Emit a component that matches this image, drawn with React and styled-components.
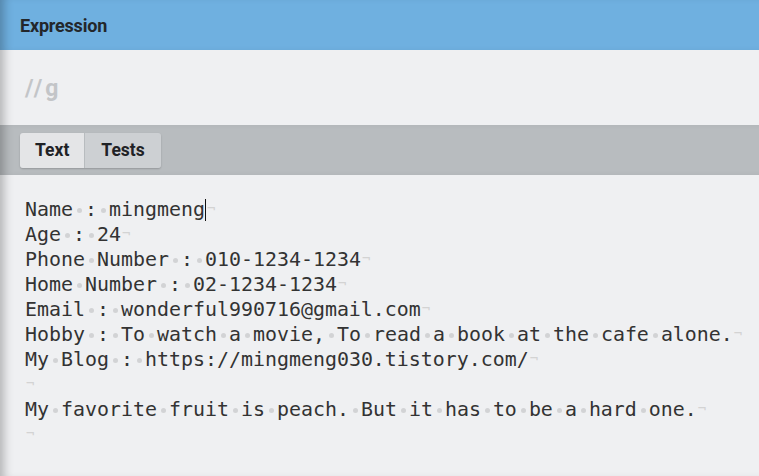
import React from 'react';
import styled, { createGlobalStyle } from 'styled-components';

const GlobalStyle = createGlobalStyle`
  html, body {
    margin: 0;
    padding: 0;
    background: #eff0f2;
  }
`;

const lines = [
  'Name : mingmeng',
  'Age : 24',
  'Phone Number : 010-1234-1234',
  'Home Number : 02-1234-1234',
  'Email : wonderful990716@gmail.com',
  'Hobby : To watch a movie, To read a book at the cafe alone.',
  'My Blog : https://mingmeng030.tistory.com/',
  '',
  'My favorite fruit is peach. But it has to be a hard one.',
  '',
];

function App() {
  return (
    <Page>
      <GlobalStyle />
      <Header>
        <Title>Expression</Title>
      </Header>
      <ExpressionBox>
        <Regex>//g</Regex>
      </ExpressionBox>
      <TabBar>
        <TabGroup>
          <Tab $active>Text</Tab>
          <Tab>Tests</Tab>
        </TabGroup>
      </TabBar>
      <Editor>
        {lines.map((line, i) => (
          <Line key={i}>
            {line.split(' ').map((word, j, arr) => (
              <React.Fragment key={j}>
                {word}
                {i === 0 && j === arr.length - 1 && <Caret />}
                {j < arr.length - 1 && <Space> </Space>}
              </React.Fragment>
            ))}
            <Eol>¬</Eol>
          </Line>
        ))}
      </Editor>
    </Page>
  );
}

const Page = styled.div`
  position: relative;
  width: 759px;
  height: 476px;
  overflow: hidden;
  background: #eff0f2;
  font-family: Roboto, 'Liberation Sans', sans-serif;
  box-shadow: inset 10px 0 10px -6px rgba(0, 0, 0, 0.25);
`;

const Header = styled.header`
  height: 50px;
  display: flex;
  align-items: center;
  padding-left: 20px;
  background: #6fb0e0;
  box-shadow: inset 10px 0 10px -6px rgba(0, 0, 0, 0.25);
`;

const Title = styled.h1`
  margin: 0;
  font-size: 18px;
  font-weight: 700;
  letter-spacing: -0.2px;
  color: #23272b;
`;

const ExpressionBox = styled.div`
  height: 75px;
  display: flex;
  align-items: center;
  padding-left: 25px;
`;

const Regex = styled.span`
  font-size: 23px;
  font-weight: 700;
  letter-spacing: 3px;
  color: #c3c5c8;
  margin-top: 2px;
`;

const TabBar = styled.div`
  height: 50px;
  display: flex;
  align-items: center;
  padding-left: 20px;
  background: #b8bcbf;
  box-shadow: inset 10px 0 10px -6px rgba(0, 0, 0, 0.25);
`;

const TabGroup = styled.div`
  display: flex;
  gap: 1px;
  border-radius: 3px;
  box-shadow: 0 1px 2px rgba(0, 0, 0, 0.2);
  overflow: hidden;
`;

const Tab = styled.button`
  height: 35px;
  padding: 0 ${(p) => (p.$active ? '15px' : '16px')};
  border: none;
  font-family: Roboto, 'Liberation Sans', sans-serif;
  font-size: 17.5px;
  font-weight: 700;
  color: #1f2226;
  background: ${(p) => (p.$active ? '#e4e5e7' : '#cdd0d3')};
`;

const Editor = styled.div`
  padding: 21px 25px 0;
  font-family: 'DejaVu Sans Mono', 'Liberation Mono', monospace;
  font-size: 19.93px;
  line-height: 25px;
  color: #333;
`;

const Line = styled.div`
  height: 25px;
  white-space: pre;
`;

const Space = styled.span`
  position: relative;

  &::after {
    content: '';
    position: absolute;
    left: 4px;
    top: 10px;
    width: 5px;
    height: 5px;
    border-radius: 50%;
    background: #d2d3d5;
  }
`;

const Eol = styled.span`
  color: #d3d3d3;
  font-size: 14px;
  vertical-align: 3px;
  margin-left: 1px;
`;

const Caret = styled.span`
  display: inline-block;
  width: 0;
  height: 22px;
  border-left: 1px solid #111;
  vertical-align: -5px;
`;

export default App;
